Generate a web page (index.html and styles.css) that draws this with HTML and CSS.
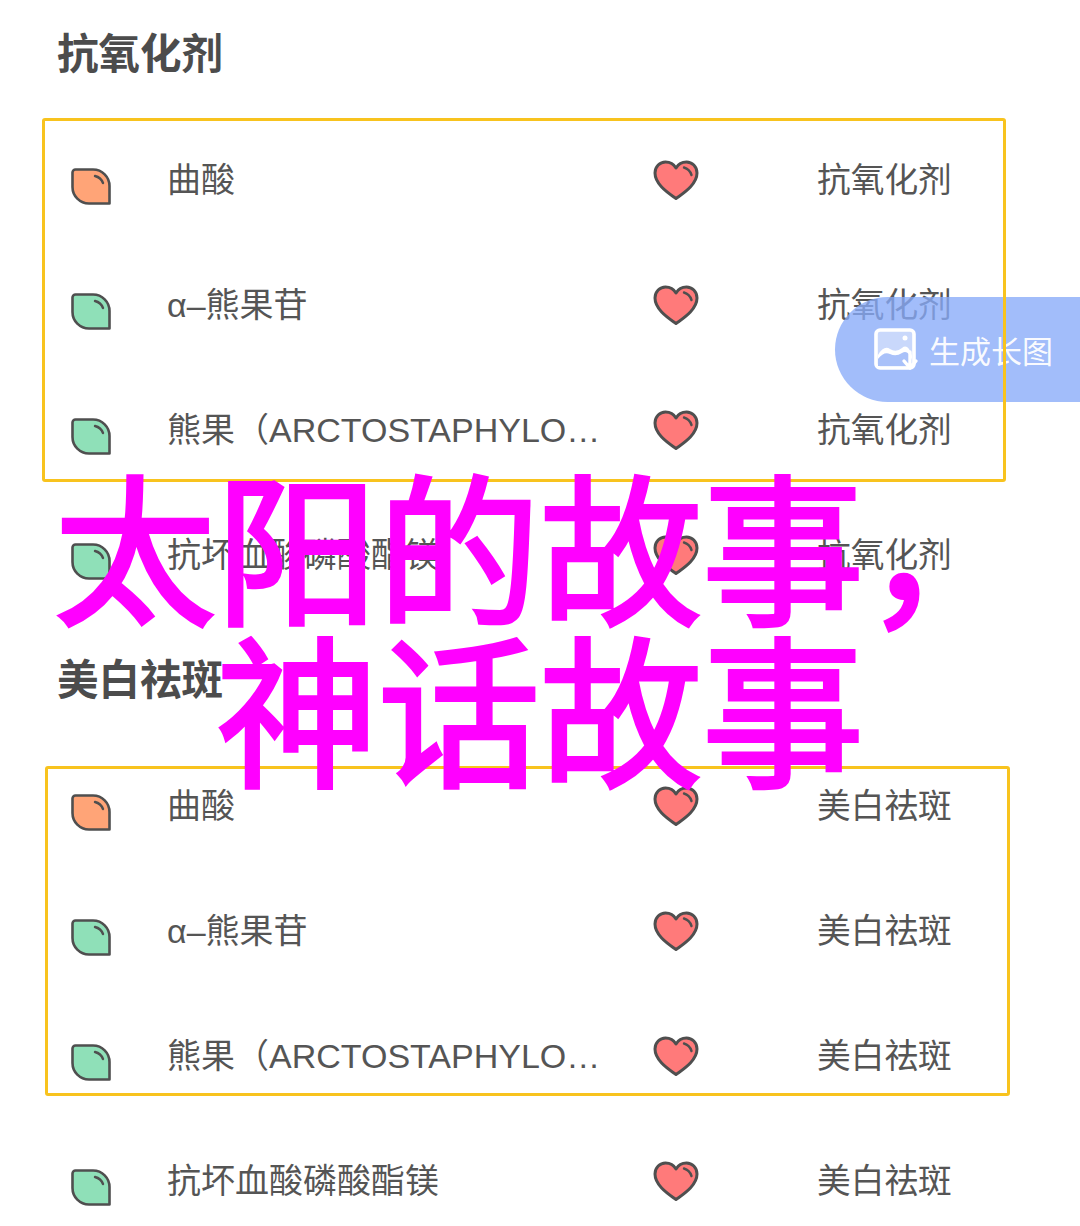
FILE: index.html
```html
<!DOCTYPE html>
<html lang="zh-CN">
<head>
    <meta charset="UTF-8">
    <meta name="viewport" content="width=device-width, initial-scale=1.0">
    <title>太阳的故事,神话故事</title>
    <link rel="stylesheet" href="styles.css">
</head>
<body>
    <svg class="defs" width="0" height="0">
        <defs>
            <symbol id="leaf" viewBox="0 0 40 37">
                <path d="M4.5 1.5 H22 A16.5 16.5 0 0 1 38.5 18 V35.5 H18 A16.5 16.5 0 0 1 1.5 19 V4.5 A3 3 0 0 1 4.5 1.5 Z" stroke="#4f4f4f" stroke-width="2.6" stroke-linejoin="round"/>
                <path d="M24 8 Q30 9.5 32 15" fill="none" stroke="#4f4f4f" stroke-width="2.4" stroke-linecap="round"/>
            </symbol>
            <symbol id="heart" viewBox="0 0 46 41">
                <path d="M23 38.5 C17 34 2 25 2 13 C2 6.5 7 2 12.5 2 C17 2 21 4.5 23 8 C25 4.5 29 2 33.5 2 C39 2 44 6.5 44 13 C44 25 29 34 23 38.5 Z" fill="#ff7a7a" stroke="#4f4f4f" stroke-width="3" stroke-linejoin="round"/>
                <path d="M31 7.5 Q36.5 9 38.5 15" fill="none" stroke="#4f4f4f" stroke-width="2.4" stroke-linecap="round"/>
            </symbol>
        </defs>
    </svg>

    <section class="group">
        <h2 class="group-title">抗氧化剂</h2>
        <div class="row">
            <svg class="leaf orange"><use href="#leaf"/></svg>
            <span class="name">曲酸</span>
            <svg class="heart"><use href="#heart"/></svg>
            <span class="tag">抗氧化剂</span>
        </div>
        <div class="row">
            <svg class="leaf green"><use href="#leaf"/></svg>
            <span class="name">α–熊果苷</span>
            <svg class="heart"><use href="#heart"/></svg>
            <span class="tag">抗氧化剂</span>
        </div>
        <div class="row">
            <svg class="leaf green"><use href="#leaf"/></svg>
            <span class="name">熊果（ARCTOSTAPHYLOS UVA-URSI）</span>
            <svg class="heart"><use href="#heart"/></svg>
            <span class="tag">抗氧化剂</span>
        </div>
        <div class="row">
            <svg class="leaf green"><use href="#leaf"/></svg>
            <span class="name">抗坏血酸磷酸酯镁</span>
            <svg class="heart"><use href="#heart"/></svg>
            <span class="tag">抗氧化剂</span>
        </div>
        <div class="frame frame-first"></div>
    </section>

    <section class="group group-next">
        <h2 class="group-title">美白祛斑</h2>
        <div class="row">
            <svg class="leaf orange"><use href="#leaf"/></svg>
            <span class="name">曲酸</span>
            <svg class="heart"><use href="#heart"/></svg>
            <span class="tag">美白祛斑</span>
        </div>
        <div class="row">
            <svg class="leaf green"><use href="#leaf"/></svg>
            <span class="name">α–熊果苷</span>
            <svg class="heart"><use href="#heart"/></svg>
            <span class="tag">美白祛斑</span>
        </div>
        <div class="row">
            <svg class="leaf green"><use href="#leaf"/></svg>
            <span class="name">熊果（ARCTOSTAPHYLOS UVA-URSI）</span>
            <svg class="heart"><use href="#heart"/></svg>
            <span class="tag">美白祛斑</span>
        </div>
        <div class="row">
            <svg class="leaf green"><use href="#leaf"/></svg>
            <span class="name">抗坏血酸磷酸酯镁</span>
            <svg class="heart"><use href="#heart"/></svg>
            <span class="tag">美白祛斑</span>
        </div>
        <div class="frame frame-second"></div>
    </section>

    <div class="long-btn">
        <svg class="long-icon" viewBox="0 0 46 44">
            <rect x="2" y="2" width="38" height="38" rx="4" fill="#c9d8fb" stroke="#fff" stroke-width="3.6"/>
            <path d="M4 27 Q10 17 16 21 T28 20 T38 28 V38 H4 Z" fill="#fff"/>
            <path d="M4 31 Q10 23 16 26 T28 25 T38 32 V38 H4 Z" fill="#a9c1f9"/>
            <circle cx="31" cy="10" r="2.5" fill="#fff"/>
            <path d="M36 24 V38 M30 33 L36 40 L42 33" fill="none" stroke="#fff" stroke-width="3.4" stroke-linecap="round" stroke-linejoin="round"/>
        </svg>
        <span>生成长图</span>
    </div>

    <h1 class="banner">太阳的故事，<br>神话故事</h1>
</body>
</html>
```

FILE: styles.css
```css
html, body {
    margin: 0;
    height: 1226px;
    overflow: hidden;
}
body {
    position: relative;
    background-color: white;
    color: #555;
    font-family: "Liberation Sans", "Noto Sans CJK SC", sans-serif;
}
.defs {
    display: block;
}

.group {
    position: relative;
}
.group-next {
    margin-top: 8px;
}
.group-title {
    margin: 0;
    height: 118px;
    padding: 33px 0 0 57px;
    box-sizing: border-box;
    font-size: 41.5px;
    line-height: 44px;
    font-weight: 700;
    color: #4c4c4c;
}

.row {
    display: grid;
    grid-template-columns: 96px 486px 164px 1fr;
    align-items: center;
    height: 125px;
    padding-left: 71px;
}
.leaf {
    width: 40px;
    height: 37px;
    margin-top: 12px;
}
.leaf.orange {
    fill: #ffa477;
}
.leaf.green {
    fill: #8fe0b8;
}
.heart {
    width: 46px;
    height: 41px;
}
.name {
    width: 438px;
    margin-bottom: 6px;
    font-size: 34px;
    white-space: nowrap;
    overflow: hidden;
    text-overflow: ellipsis;
}
.tag {
    margin-bottom: 6px;
    font-size: 33.7px;
    white-space: nowrap;
}

/* gold outlines sit over the rows */
.frame {
    position: absolute;
    box-sizing: border-box;
    border: 3px solid #f8c31e;
    border-radius: 3px;
    z-index: 3;
}
.frame-first {
    left: 42px;
    top: 118px;
    width: 964px;
    height: 364px;
}
.frame-second {
    left: 45px;
    top: 140px;
    width: 965px;
    height: 330px;
}

.long-btn {
    position: absolute;
    right: 0;
    top: 297px;
    display: flex;
    align-items: center;
    gap: 9px;
    box-sizing: border-box;
    width: 245px;
    height: 105px;
    padding-left: 39px;
    border-radius: 53px 0 0 53px;
    background-color: rgba(136, 170, 248, 0.78);
    color: rgba(255, 255, 255, 0.95);
    font-size: 31px;
    white-space: nowrap;
    z-index: 2;
}
.long-icon {
    width: 46px;
    height: 44px;
}

.banner {
    position: absolute;
    left: 0;
    top: 476px;
    width: 100%;
    margin: 0;
    text-align: center;
    color: #ff00ff;
    font-size: 162px;
    line-height: 162px;
    font-weight: 400;
    -webkit-text-stroke: 4px #ff00ff;
    z-index: 4;
}
```
